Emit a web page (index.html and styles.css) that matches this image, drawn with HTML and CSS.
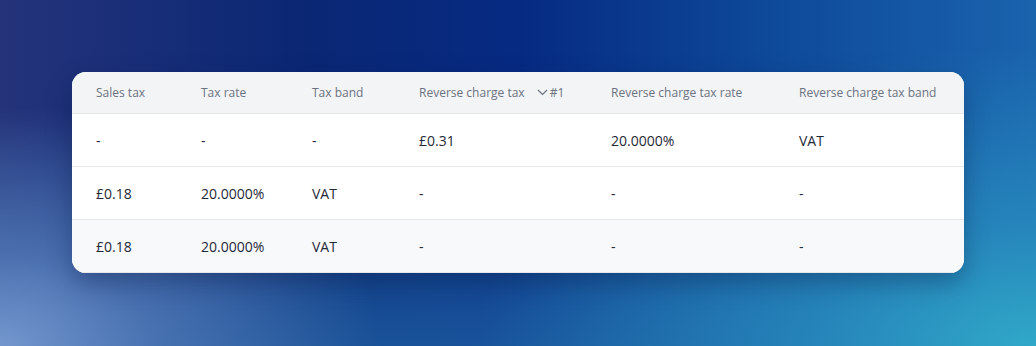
FILE: index.html
```html
<!DOCTYPE html>
<html>
<head>
<meta charset="utf-8">
<link rel="stylesheet" href="styles.css">
</head>
<body>
<div class="stage">
  <div class="card">
    <table class="tbl">
      <colgroup>
        <col class="c1"><col class="c2"><col class="c3"><col class="c4"><col class="c5"><col class="c6">
      </colgroup>
      <thead>
        <tr>
          <th>Sales tax</th>
          <th>Tax rate</th>
          <th>Tax band</th>
          <th><span class="hd">Reverse charge tax<span class="sort"><svg width="11" height="7" viewBox="0 0 11 7"><path d="M1 1 L5.5 5.5 L10 1" fill="none" stroke="currentColor" stroke-width="1.2"/></svg>#1</span></span></th>
          <th>Reverse charge tax rate</th>
          <th>Reverse charge tax band</th>
        </tr>
      </thead>
      <tbody>
        <tr><td>-</td><td>-</td><td>-</td><td>£0.31</td><td>20.0000%</td><td>VAT</td></tr>
        <tr><td>£0.18</td><td>20.0000%</td><td>VAT</td><td>-</td><td>-</td><td>-</td></tr>
        <tr class="alt"><td>£0.18</td><td>20.0000%</td><td>VAT</td><td>-</td><td>-</td><td>-</td></tr>
      </tbody>
    </table>
  </div>
</div>
</body>
</html>
```

FILE: styles.css
```css
html, body {
  margin: 0;
  padding: 0;
}
body {
  width: 1036px;
  height: 346px;
  overflow: hidden;
  font-family: "Open Sans", "Noto Sans", sans-serif;
}
.stage {
  box-sizing: border-box;
  width: 1036px;
  height: 346px;
  padding: 72px 72px 0 72px;
  background:
    radial-gradient(ellipse 380px 240px at 0% 100%, rgba(115,150,205,1) 0%, rgba(100,135,195,0.6) 40%, rgba(80,120,185,0) 100%),
    radial-gradient(ellipse 560px 300px at 100% 100%, rgba(48,168,200,1) 0%, rgba(42,148,195,0.7) 40%, rgba(30,120,180,0) 100%),
    linear-gradient(180deg, rgba(0,0,0,0) 35%, rgba(32,100,165,0.7) 100%),
    linear-gradient(90deg, #24337a 0%, #0a2774 30%, #062a82 50%, #0e4a9a 75%, #1a63ad 100%);
}
.card {
  width: 892px;
  background: #ffffff;
  border-radius: 14px;
  overflow: hidden;
  box-shadow: 0 10px 24px rgba(10, 25, 70, 0.35);
}
.tbl {
  width: 100%;
  border-collapse: collapse;
  table-layout: fixed;
}
.c1 { width: 105px; }
.c2 { width: 111px; }
.c3 { width: 107px; }
.c4 { width: 192px; }
.c5 { width: 188px; }
.c6 { width: auto; }
.tbl th {
  background: #f3f4f6;
  color: #6b7280;
  font-size: 12px;
  font-weight: 400;
  text-align: left;
  height: 41px;
  padding: 0 0 0 24px;
  border-bottom: 1px solid #e5e7eb;
  white-space: nowrap;
}
.tbl td {
  color: #1f2937;
  font-size: 14px;
  height: 52px;
  padding: 0 0 0 24px;
  border-bottom: 1px solid #e5e7eb;
  white-space: nowrap;
}
.tbl tr.alt td {
  background: #f8f9fb;
}
.hd {
  display: inline-flex;
  align-items: center;
}
.sort {
  display: inline-flex;
  align-items: center;
  gap: 2px;
  margin-left: 12px;
  color: #6b7280;
}
.sort svg {
  display: block;
}
```
